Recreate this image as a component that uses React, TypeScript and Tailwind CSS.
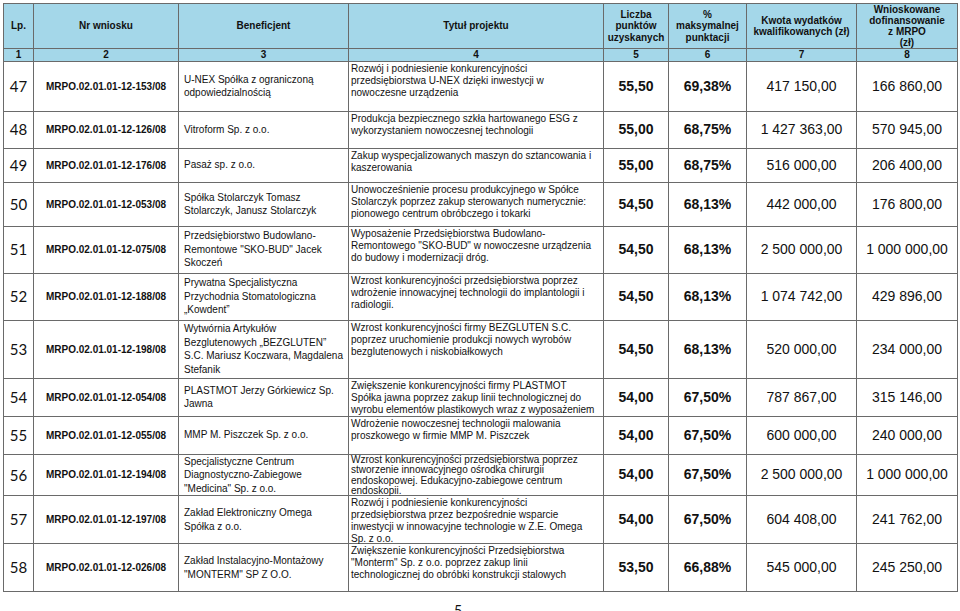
import React from 'react'

type Row = {
    lp: number; nr: string; benef: string[]; title: string[]
    pts: string; pct: string; kwota: string; dof: string; h: number; tight?: boolean
}

const ROWS: Row[] = [
    { lp: 47, nr: 'MRPO.02.01.01-12-153/08', benef: ['U-NEX Spółka z ograniczoną', 'odpowiedzialnością'], title: ['Rozwój i podniesienie konkurencyjności', 'przedsiębiorstwa U-NEX dzięki inwestycji w', 'nowoczesne urządzenia'], pts: '55,50', pct: '69,38%', kwota: '417 150,00', dof: '166 860,00', h: 50 },
    { lp: 48, nr: 'MRPO.02.01.01-12-126/08', benef: ['Vitroform Sp. z o.o.'], title: ['Produkcja bezpiecznego szkła hartowanego ESG z', 'wykorzystaniem nowoczesnej technologii'], pts: '55,00', pct: '68,75%', kwota: '1 427 363,00', dof: '570 945,00', h: 37 },
    { lp: 49, nr: 'MRPO.02.01.01-12-176/08', benef: ['Pasaż sp. z o.o.'], title: ['Zakup wyspecjalizowanych maszyn do sztancowania i', 'kaszerowania'], pts: '55,00', pct: '68,75%', kwota: '516 000,00', dof: '206 400,00', h: 34 },
    { lp: 50, nr: 'MRPO.02.01.01-12-053/08', benef: ['Spółka Stolarczyk Tomasz', 'Stolarczyk, Janusz Stolarczyk'], title: ['Unowocześnienie procesu produkcyjnego w Spółce', 'Stolarczyk poprzez zakup sterowanych numerycznie:', 'pionowego centrum obróbczego i tokarki'], pts: '54,50', pct: '68,13%', kwota: '442 000,00', dof: '176 800,00', h: 44 },
    { lp: 51, nr: 'MRPO.02.01.01-12-075/08', benef: ['Przedsiębiorstwo Budowlano-', 'Remontowe "SKO-BUD" Jacek', 'Skoczeń'], title: ['Wyposażenie Przedsiębiorstwa Budowlano-', 'Remontowego "SKO-BUD" w nowoczesne urządzenia', 'do budowy i modernizacji dróg.'], pts: '54,50', pct: '68,13%', kwota: '2 500 000,00', dof: '1 000 000,00', h: 47 },
    { lp: 52, nr: 'MRPO.02.01.01-12-188/08', benef: ['Prywatna Specjalistyczna', 'Przychodnia Stomatologiczna', '„Kowdent”'], title: ['Wzrost konkurencyjności przedsiębiorstwa poprzez', 'wdrożenie innowacyjnej technologii do implantologii i', 'radiologii.'], pts: '54,50', pct: '68,13%', kwota: '1 074 742,00', dof: '429 896,00', h: 47 },
    { lp: 53, nr: 'MRPO.02.01.01-12-198/08', benef: ['Wytwórnia Artykułów', 'Bezglutenowych „BEZGLUTEN”', 'S.C. Mariusz Koczwara, Magdalena', 'Stefanik'], title: ['Wzrost konkurencyjności firmy BEZGLUTEN S.C.', 'poprzez uruchomienie produkcji nowych wyrobów', 'bezglutenowych i niskobiałkowych'], pts: '54,50', pct: '68,13%', kwota: '520 000,00', dof: '234 000,00', h: 58 },
    { lp: 54, nr: 'MRPO.02.01.01-12-054/08', benef: ['PLASTMOT Jerzy Górkiewicz Sp.', 'Jawna'], title: ['Zwiększenie konkurencyjności firmy PLASTMOT', 'Spółka jawna poprzez zakup linii technologicznej do', 'wyrobu elementów plastikowych wraz z wyposażeniem'], pts: '54,00', pct: '67,50%', kwota: '787 867,00', dof: '315 146,00', h: 38 },
    { lp: 55, nr: 'MRPO.02.01.01-12-055/08', benef: ['MMP M. Piszczek Sp. z o.o.'], title: ['Wdrożenie nowoczesnej technologii malowania', 'proszkowego w firmie MMP M. Piszczek'], pts: '54,00', pct: '67,50%', kwota: '600 000,00', dof: '240 000,00', h: 38 },
    { lp: 56, nr: 'MRPO.02.01.01-12-194/08', benef: ['Specjalistyczne Centrum', 'Diagnostyczno-Zabiegowe', '"Medicina" Sp. z o.o.'], title: ['Wzrost konkurencyjności przedsiębiorstwa poprzez', 'stworzenie innowacyjnego ośrodka chirurgii', 'endoskopowej. Edukacyjno-zabiegowe centrum', 'endoskopii.'], pts: '54,00', pct: '67,50%', kwota: '2 500 000,00', dof: '1 000 000,00', h: 39, tight: true },
    { lp: 57, nr: 'MRPO.02.01.01-12-197/08', benef: ['Zakład Elektroniczny Omega', 'Spółka z o.o.'], title: ['Rozwój i podniesienie konkurencyjności', 'przedsiębiorstwa przez bezpośrednie wsparcie', 'inwestycji w innowacyjne technologie w Z.E. Omega', 'Sp. z o.o.'], pts: '54,00', pct: '67,50%', kwota: '604 408,00', dof: '241 762,00', h: 48 },
    { lp: 58, nr: 'MRPO.02.01.01-12-026/08', benef: ['Zakład Instalacyjno-Montażowy', '"MONTERM" SP Z O.O.'], title: ['Zwiększenie konkurencyjności Przedsiębiorstwa', '"Monterm" Sp. z o.o. poprzez zakup linii', 'technologicznej do obróbki konstrukcji stalowych'], pts: '53,50', pct: '66,88%', kwota: '545 000,00', dof: '245 250,00', h: 48 },
]

const cell = 'border border-[#6a6a6a] p-0'
const head = `${cell} bg-[#a4d7e9] text-center align-middle font-bold text-[10px] leading-[11.5px]`

export default function App() {
    return (
        <div className="w-[960px] h-[611px] bg-white overflow-hidden text-[#111] font-['Liberation_Sans',Arial,sans-serif]">
            <div className="pt-[3px] pl-[3px]">
                <table className="table-fixed border-collapse w-[955px]">
                    <colgroup>
                        <col className="w-[30px]" />
                        <col className="w-[145px]" />
                        <col className="w-[170px]" />
                        <col className="w-[255px]" />
                        <col className="w-[65px]" />
                        <col className="w-[78px]" />
                        <col className="w-[110px]" />
                        <col className="w-[101px]" />
                    </colgroup>
                    <thead>
                        <tr className="h-[44px]">
                            <th className={head}>Lp.</th>
                            <th className={head}>Nr wniosku</th>
                            <th className={head}>Beneficjent</th>
                            <th className={head}>Tytuł projektu</th>
                            <th className={head}>Liczba<br />punktów<br />uzyskanych</th>
                            <th className={head}>%<br />maksymalnej<br />punktacji</th>
                            <th className={head}>Kwota wydatków<br />kwalifikowanych (zł)</th>
                            <th className={`${head} leading-[11px]`}>Wnioskowane<br />dofinansowanie<br />z MRPO<br />(zł)</th>
                        </tr>
                        <tr className="h-[10px]">
                            {[1, 2, 3, 4, 5, 6, 7, 8].map((n) => (
                                <th key={n} className={`${head} leading-[9px]`}>{n}</th>
                            ))}
                        </tr>
                    </thead>
                    <tbody>
                        {ROWS.map((r) => (
                            <tr key={r.lp} style={{ height: r.h }}>
                                <td className={`${cell} text-center align-middle text-[15px] font-['Lato',sans-serif]`}>{r.lp}</td>
                                <td className={`${cell} text-center align-middle font-bold text-[10px]`}>{r.nr}</td>
                                <td className={`${cell} align-middle pl-[5px] text-[10px] leading-[13.5px] whitespace-nowrap`}>
                                    {r.benef.map((l, i) => <div key={i}>{l}</div>)}
                                </td>
                                <td className={`${cell} align-top pl-[2px] text-[10px] whitespace-nowrap`}>
                                    <div
                                        className={`overflow-visible ${r.tight ? 'leading-[10.5px]' : 'leading-[12px] pt-[1px]'}`}
                                        style={{ height: r.h - 2 }}
                                    >
                                        {r.title.map((l, i) => <div key={i}>{l}</div>)}
                                    </div>
                                </td>
                                <td className={`${cell} text-center align-middle font-bold text-[14px]`}>{r.pts}</td>
                                <td className={`${cell} text-center align-middle font-bold text-[14px]`}>{r.pct}</td>
                                <td className={`${cell} text-center align-middle text-[14px]`}>{r.kwota}</td>
                                <td className={`${cell} text-center align-middle text-[14px]`}>{r.dof}</td>
                            </tr>
                        ))}
                    </tbody>
                </table>
                <div className="pt-[10px] pl-[451px] text-[14px] leading-[16px] font-['Lato',sans-serif]">5</div>
            </div>
        </div>
    )
}
